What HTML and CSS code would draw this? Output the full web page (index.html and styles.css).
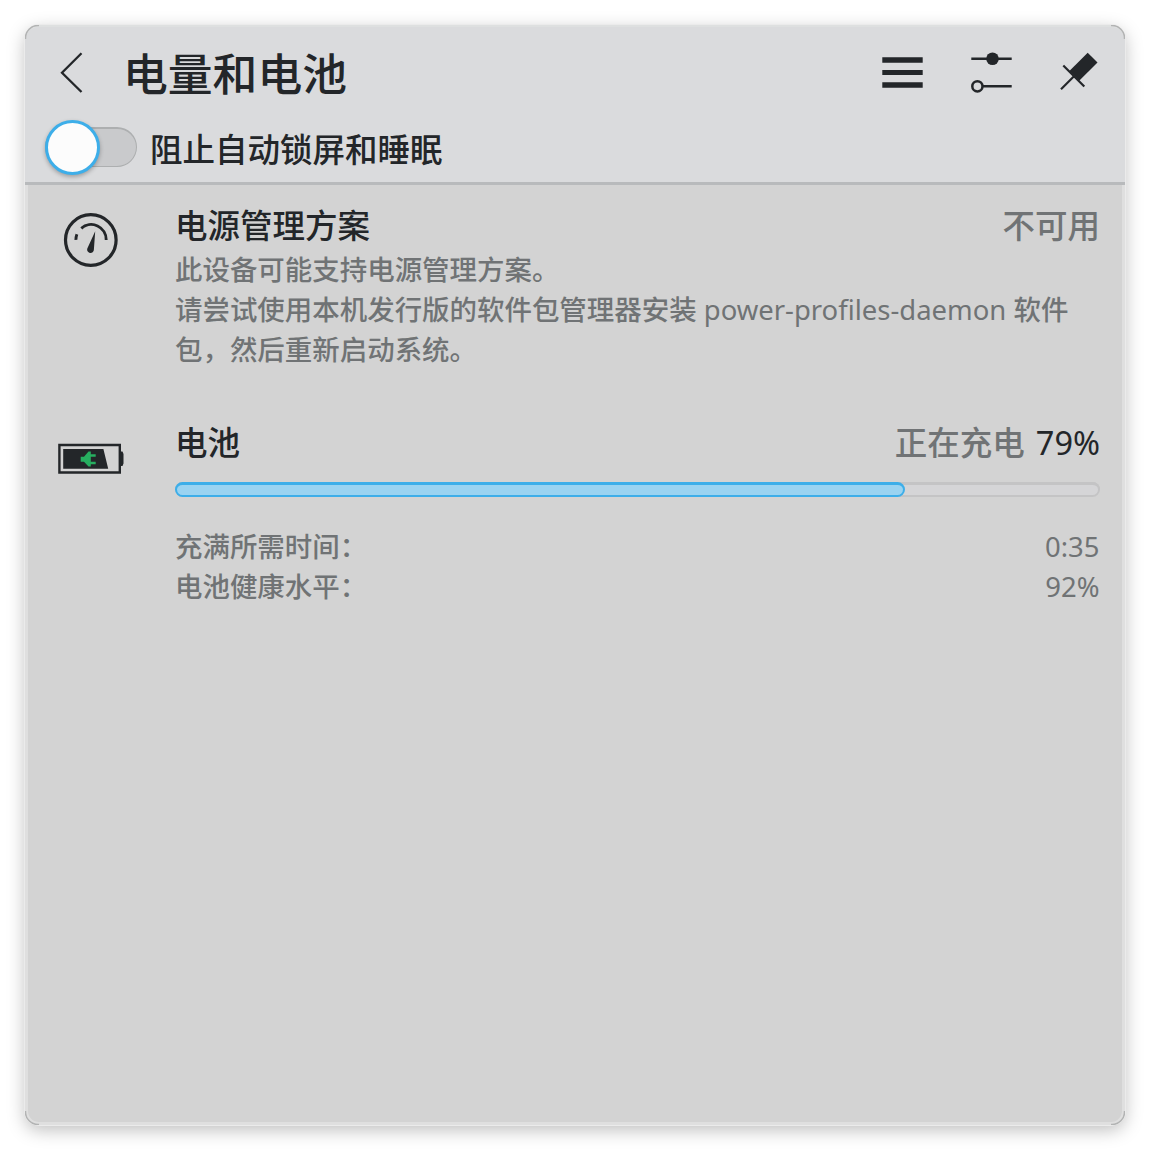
FILE: index.html
```html
<!DOCTYPE html>
<html lang="zh-CN">
<head>
<meta charset="utf-8">
<title>电量和电池</title>
<link rel="stylesheet" href="styles.css">
</head>
<body>
<main class="panel">
  <header class="header">
    <div class="titlebar">
      <svg class="back" width="30" height="50" viewBox="0 0 30 50"><path d="M26.500 5.300 7 24.700 26.500 44"/></svg>
      <h1 class="title">电量和电池</h1>
      <div class="actions">
        <svg width="42" height="50" viewBox="881 48 42 50"><path class="fill" d="M882.300 57.200h40.400v5.600h-40.400zM882.300 69.900h40.400v5.200h-40.400zM882.300 82.200h40.400v5.600h-40.400z"/></svg>
        <svg width="42" height="50" viewBox="970 48 42 50"><path class="line" d="M971.300 58.800h40.400M983 86.200h28.700"/><circle class="fill" cx="992.500" cy="58.800" r="6.300"/><circle class="line" cx="977.400" cy="86.300" r="5.100"/></svg>
        <svg width="42" height="50" viewBox="1059 48 42 50"><path class="fill" d="m1087.700 52.700 9.800 9.800-18.300 18.300-9.800-9.800z"/><path class="line thin" d="m1063.300 65.500 21 21M1061 89.200l13.500-13.500"/></svg>
      </div>
    </div>
    <label class="inhibit">
      <span class="switch"><span class="knob"></span></span>
      <span class="inhibit-label">阻止自动锁屏和睡眠</span>
    </label>
  </header>
  <section class="item profile">
    <svg class="icon" width="70" height="70" viewBox="55 205 70 70">
      <circle class="line ring" cx="90.800" cy="240" r="25.300"/>
      <path class="line arc" d="M81.300 228.300a15 15 0 0 1 24.900 11.700M75.900 239.900a15 15 0 0 1 1-5.700"/>
      <path class="fill" d="m95.200 231.300-1.300 18.300a3.400 3.400 0 1 1-6.600-1.200z"/>
    </svg>
    <div class="content">
      <div class="row"><h2 class="name">电源管理方案</h2><span class="status">不可用</span></div>
      <p class="desc">此设备可能支持电源管理方案。<br>请尝试使用本机发行版的软件包管理器安装 <span class="package">power-profiles-daemon</span> 软件包，然后重新启动系统。</p>
    </div>
  </section>
  <section class="item battery">
    <svg class="icon" width="70" height="70" viewBox="55 424 70 70">
      <path class="line case" d="M59.400 445h60.400v27.500H59.400z"/>
      <path class="fill" d="M121 451.500h1.500l1 2.500v9.500l-1 2.500H121zM63.200 449h40.200l4.800 19.800h-45z"/>
      <path class="plug" d="M88.500 451.600h2.300v2.600h4.900v2.500h-4.900v5h4.900v2.500h-4.900v2.200h-2.300l-4.500-4.600h-3.300v-5H84z"/>
    </svg>
    <div class="content">
      <div class="row"><h2 class="name">电池</h2><span class="status">正在充电<b class="percent">79%</b></span></div>
      <div class="bar"><div class="bar-fill" style="width:78.9%"></div></div>
      <dl class="details">
        <div class="detail"><dt>充满所需时间：</dt><dd>0:35</dd></div>
        <div class="detail"><dt>电池健康水平：</dt><dd>92%</dd></div>
      </dl>
    </div>
  </section>
  <svg class="corner tl" width="14" height="14"><path d="M.5 14V13A12.500 12.500 0 0 1 13 .5h1"/></svg>
  <svg class="corner tr" width="14" height="14"><path d="M.5 14V13A12.500 12.500 0 0 1 13 .5h1"/></svg>
  <svg class="corner br" width="14" height="14"><path d="M.5 14V13A12.500 12.500 0 0 1 13 .5h1"/></svg>
  <svg class="corner bl" width="14" height="14"><path d="M.5 14V13A12.500 12.500 0 0 1 13 .5h1"/></svg>
</main>
</body>
</html>
```
FILE: styles.css
```css
* { box-sizing: border-box; }
html, body { height: 100%; }
body {
  margin: 0;
  padding: 25px;
  overflow: hidden;
  background: #fff;
  color: #232629;
  font-family: "Noto Sans", "Noto Sans CJK SC", sans-serif;
  font-size: 32.5px;
}
h1, h2, p, dl, dd { margin: 0; font-weight: 500; }
svg { display: block; flex: none; }
.panel {
  position: relative;
  height: 1100px;
  border-radius: 14px;
  background: #d3d3d3;
  box-shadow: 0 0 0 1px #ebebeb, 0 5px 18px rgba(0, 0, 0, .26), inset 0 0 0 3px #dfdfdf;
}
.header {
  height: 160px;
  border-bottom: 3px solid #b8babc;
  border-radius: 14px 14px 0 0;
  background: #dadbdd;
  box-shadow: inset 0 2px #dee0e0;
}
.titlebar { display: flex; align-items: center; height: 95px; padding: 0 24px 0 30px; }
.back { fill: none; stroke: #232629; stroke-width: 2.300; }
.title { margin-left: 38px; font-size: 44.8px; line-height: 64px; padding-top: 2px; }
.actions { display: flex; gap: 47px; margin-left: auto; }
.fill { fill: #232629; }
.line { fill: none; stroke: #232629; stroke-width: 2.500; }
.thin { stroke-width: 2.200; }
.ring { stroke-width: 3.200; }
.arc { stroke-width: 2.900; }
.case { stroke-width: 2.400; }
.plug { fill: #27ae60; }
.inhibit { display: flex; align-items: center; height: 53px; padding-left: 20px; }
.switch {
  display: flex;
  align-items: center;
  width: 92px;
  height: 40px;
  border: 1px solid #adafb0;
  border-top-width: 2px;
  border-radius: 20px;
  background: #c9cacc;
}
.knob {
  flex: none;
  width: 55px;
  height: 55px;
  margin-left: -1px;
  border: 3px solid #3daee9;
  border-radius: 50%;
  background: #fcfcfc;
  box-shadow: 0 2px 4px rgba(0, 0, 0, .28);
}
.inhibit-label { margin-left: 13px; padding-top: 7px; font-weight: 500; line-height: 44px; }
.item { display: flex; padding: 0 25px 0 30px; }
.profile { padding-top: 17px; height: 217px; }
.battery { padding-top: 17px; }
.profile .icon { margin-top: 3px; }
.battery .icon { margin-top: 5px; }
.content { flex: 1; min-width: 0; margin-left: 50px; }
.row { display: flex; justify-content: space-between; align-items: baseline; height: 48px; line-height: 48px; }
.profile .row { line-height: 47px; }
.name { font-size: 32.5px; }
.status { color: #707375; font-weight: 500; }
.percent { margin-left: 11px; color: #232629; font-weight: 400; }
.desc { font-size: 27.46px; line-height: 40px; color: #707375; font-weight: 500; }
.package { font-weight: 400; }
.bar {
  height: 15px;
  margin-top: 15px;
  border-radius: 7.5px;
  background: #d5d5d7;
  box-shadow: inset 0 0 0 2px #c4c4c5, inset 0 3px #c4c4c5;
}
.bar-fill { height: 100%; border: 2px solid #3daee9; border-top-width: 3px; border-radius: 7.5px; background: #9ad3f1; }
.details { margin-top: 30px; color: #707375; font-size: 27.46px; line-height: 40px; }
.detail { display: flex; justify-content: space-between; height: 40px; }
dt { font-weight: 500; }
dd { padding-right: .5px; font-weight: 400; }
.corner { position: absolute; fill: none; stroke: #b2b3b3; stroke-width: 1.500; }
.tl { top: 0; left: 0; }
.tr { top: 0; right: 0; transform: rotate(90deg); }
.br { right: 0; bottom: 0; transform: rotate(180deg); }
.bl { left: 0; bottom: 0; transform: rotate(270deg); }
```
